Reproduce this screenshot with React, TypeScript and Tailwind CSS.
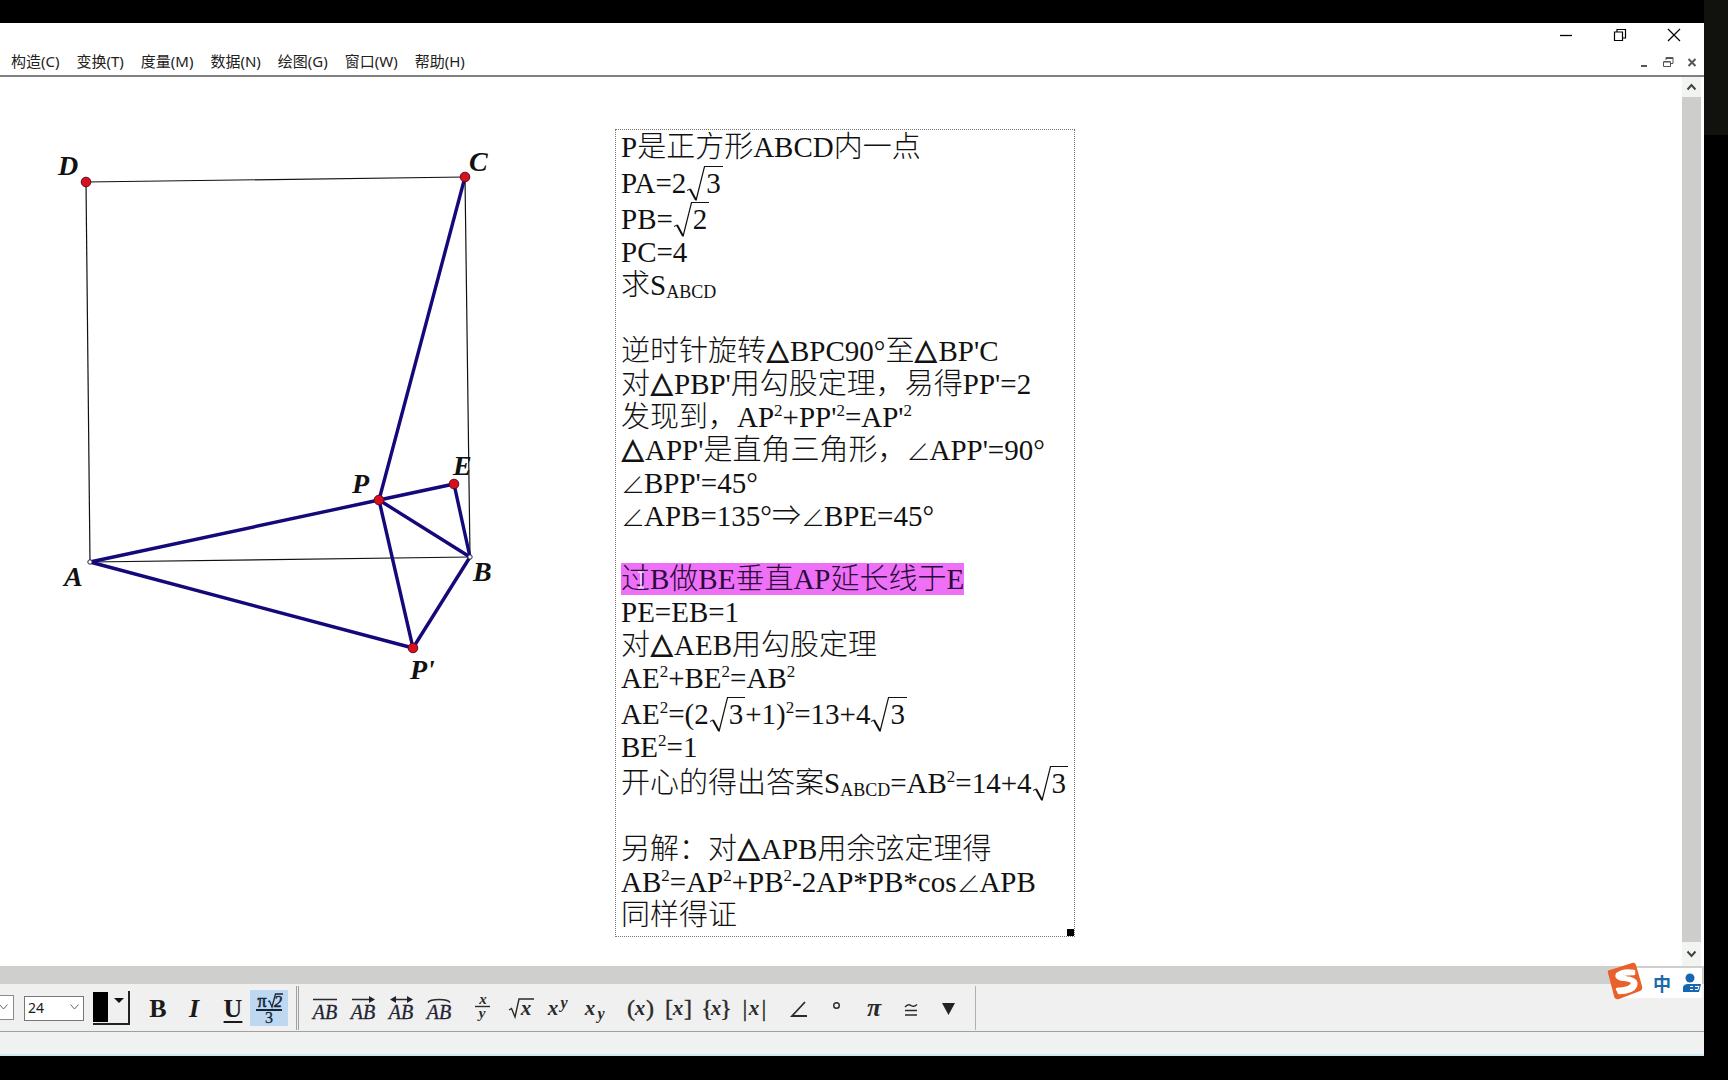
import type { ReactNode } from "react";

const serif = "font-['Liberation_Serif','Noto_Sans_CJK_SC',serif]";

const menus = ["构造(C)", "变换(T)", "度量(M)", "数据(N)", "绘图(G)", "窗口(W)", "帮助(H)"];

const points = {
  A: [90, 485],
  B: [470, 480],
  C: [465, 100],
  D: [86, 105],
  P: [379, 423],
  E: [454, 407],
  Q: [413, 571],
} as const;

type Name = keyof typeof points;

const thin: [Name, Name][] = [["A", "B"], ["B", "C"], ["C", "D"], ["D", "A"]];
const thick: [Name, Name][] = [["C", "P"], ["A", "P"], ["P", "E"], ["E", "B"], ["P", "B"], ["P", "Q"], ["Q", "B"], ["A", "Q"]];
const labels: [string, number, number][] = [
  ["D", 58, 98],
  ["C", 469, 94],
  ["A", 64, 509],
  ["P", 352, 416],
  ["E", 453, 398],
  ["B", 473, 504],
  ["P'", 410, 602],
];

function Segment({ ends, width, color }: { ends: [Name, Name]; width: number; color: string }) {
  const [a, b] = ends;
  return (
    <line x1={points[a][0]} y1={points[a][1]} x2={points[b][0]} y2={points[b][1]} stroke={color} strokeWidth={width} />
  );
}

function Figure() {
  return (
    <svg width="600" height="640" viewBox="0 0 600 640" className="shrink-0" role="img" aria-label="正方形ABCD">
      {thin.map((s) => <Segment key={s.join("")} ends={s} width={1.2} color="#111111" />)}
      {thick.map((s) => <Segment key={s.join("")} ends={s} width={3.4} color="#14087a" />)}
      {(["D", "C", "P", "E", "Q"] as Name[]).map((n) => (
        <circle key={n} cx={points[n][0]} cy={points[n][1]} r="4.8" fill="#d8101c" stroke="#5c0a2a" strokeWidth="1" />
      ))}
      {(["A", "B"] as Name[]).map((n) => (
        <circle key={n} cx={points[n][0]} cy={points[n][1]} r="2.2" fill="#ffffff" stroke="#222244" strokeWidth="1" />
      ))}
      {labels.map(([t, x, y]) => (
        <text key={t} x={x} y={y} className="font-['Liberation_Serif',serif] text-[28px] font-bold italic" fill="#111111">{t}</text>
      ))}
    </svg>
  );
}

function Root({ children }: { children: ReactNode }) {
  return (
    <span className="inline-flex h-[38px] align-top leading-[38px]">
      <svg width="20" height="38" viewBox="0 0 20 38" fill="none" stroke="#111111">
        <path d="M1 26.5L4 25" strokeWidth="1" />
        <path d="M4 25L10 36" strokeWidth="2" />
        <path d="M10 36.5L18.500 2.500H20" strokeWidth="1.2" />
      </svg>
      <span className="bg-linear-to-b from-[#111111] to-[#111111] bg-[length:100%_1px] bg-[position:0_2px] bg-no-repeat pr-0.5">{children}</span>
    </span>
  );
}

const Tri = () => (
  <span className="inline-block w-6 text-center align-[2px] font-['DejaVu_Sans',sans-serif] text-[28px] leading-none [-webkit-text-stroke:1px_#111111]">△</span>
);
const Ang = () => (
  <span className="inline-block w-[23px] text-center font-['Noto_Sans_CJK_SC',sans-serif] text-[24px] leading-none">∠</span>
);
const Sq = () => <sup className="-top-[11px] text-[17px]">2</sup>;
const Sub = () => <sub className="-bottom-[3px] text-[18px]">ABCD</sub>;

const rowHeights = {
  short: "h-8 leading-8",
  normal: "h-[33px] leading-[33px]",
  tall: "h-9 leading-[38px]",
};

function Row({ children, size = "normal" }: { children?: ReactNode; size?: keyof typeof rowHeights }) {
  return <p className={rowHeights[size]}>{children}</p>;
}

function Proof() {
  return (
    <section className={`relative mt-[52px] mb-7 shrink-0 self-start border border-dotted border-[#777777] pt-px pb-1 pr-1 pl-[5px] w-[460px] ml-[15px] whitespace-nowrap text-[29px] font-light text-[#111111] ${serif}`}>
      <Row>P是正方形ABCD内一点</Row>
      <Row size="tall">PA=2<Root>3</Root></Row>
      <Row size="tall">PB=<Root>2</Root></Row>
      <Row>PC=4</Row>
      <Row>求S<Sub /></Row>
      <Row />
      <Row>逆时针旋转<Tri />BPC90°至<Tri />BP'C</Row>
      <Row>对<Tri />PBP'用勾股定理，易得PP'=2</Row>
      <Row>发现到，AP<Sq />+PP'<Sq />=AP'<Sq /></Row>
      <Row><Tri />APP'是直角三角形，<Ang />APP'=90°</Row>
      <Row size="short"><Ang />BPP'=45°</Row>
      <Row size="short"><Ang />APB=135°<span className="inline-block w-[29px] text-center font-['Noto_Sans_CJK_SC',sans-serif] leading-none">⇒</span><Ang />BPE=45°</Row>
      <Row size="short" />
      <Row>
        <mark className="relative inline-block h-8 bg-[#ee70f6] leading-[33px] text-[#2a0a3a]">
          过B做BE垂直AP延长线于E
          <svg className="absolute top-2 left-4" width="8" height="18" viewBox="0 0 8 18" fill="none" stroke="#f8d8ff" strokeWidth="1.5">
            <path d="M1 1H3L4 2L5 1H7M4 2V16M1 17H3L4 16L5 17H7" />
          </svg>
        </mark>
      </Row>
      <Row>PE=EB=1</Row>
      <Row>对<Tri />AEB用勾股定理</Row>
      <Row>AE<Sq />+BE<Sq />=AB<Sq /></Row>
      <Row size="tall">AE<Sq />=(2<Root>3</Root>+1)<Sq />=13+4<Root>3</Root></Row>
      <Row>BE<Sq />=1</Row>
      <Row size="tall">开心的得出答案S<Sub />=AB<Sq />=14+4<Root>3</Root></Row>
      <Row />
      <Row>另解：对<Tri />APB用余弦定理得</Row>
      <Row>AB<Sq />=AP<Sq />+PB<Sq />-2AP*PB*cos<Ang />APB</Row>
      <Row>同样得证</Row>
      <span className="absolute right-0 bottom-0 size-[7px] bg-black" />
    </section>
  );
}

function Chevron({ className = "", up }: { className?: string; up?: boolean }) {
  return (
    <svg className={className} width="11" height="8" viewBox="0 0 11 8" fill="none" stroke="currentColor">
      <path d={up ? "M1.5 6.5L5.5 2L9.5 6.5" : "M1.5 1.5L5.5 6L9.5 1.5"} />
    </svg>
  );
}

function Tool({ label, children }: { label: string; children: ReactNode }) {
  return (
    <button type="button" aria-label={label} className="flex h-9 w-[38px] items-center justify-center">
      {children}
    </button>
  );
}

function Glyph({ children }: { children: ReactNode }) {
  return (
    <svg width="36" height="34" viewBox="0 0 36 34" fill="none" stroke="#2a2a2a" className="overflow-visible font-['Liberation_Serif',serif]">
      {children}
    </svg>
  );
}

const AB = () => <text x="18" y="26" textAnchor="middle" fontSize="20" fontStyle="italic" fill="#222230" stroke="#222230" strokeWidth=".3">AB</text>;

function X({ x, y, size = 21, t = "x" }: { x: number; y: number; size?: number; t?: string }) {
  return <text x={x} y={y} textAnchor="middle" fontSize={size} fontStyle="italic" fontWeight="bold" fill="#2a2a2a" stroke="none">{t}</text>;
}

function Bracket({ l, r }: { l: string; r: string }) {
  return (
    <Glyph>
      <text x="8" y="23" textAnchor="middle" fontSize="24" fill="#2a2a2a" strokeWidth=".4">{l}</text>
      <X x={17} y={22} />
      <text x="27" y="23" textAnchor="middle" fontSize="24" fill="#2a2a2a" strokeWidth=".4">{r}</text>
    </Glyph>
  );
}

function Toolbar() {
  return (
    <div className="flex h-12 items-center border-b border-[#a0a0a0] bg-[#f0f0f0] text-[#1a1a1a]">
      <label className="relative block h-[25px] w-[14px]">
        <select aria-label="字体" className="size-full appearance-none border border-l-0 border-[#8a8a8a] bg-white" />
        <Chevron className="pointer-events-none absolute top-2 right-[5px] text-[#666666]" />
      </label>
      <label className="relative ml-2.5 block h-[25px] w-[60px]">
        <select aria-label="字号" defaultValue="24" className="size-full appearance-none border border-[#777777] bg-white pl-[3px] font-['Noto_Sans',sans-serif] text-sm leading-5">
          <option>24</option>
        </select>
        <Chevron className="pointer-events-none absolute top-2 right-1 text-[#666666]" />
      </label>
      <button type="button" aria-label="颜色" className="ml-[9px] flex h-[34px] w-[37px] border-r-2 border-b-2 border-[#222222]">
        <span className="mt-px h-[30px] w-[15px] bg-black" />
        <svg className="mt-1.5 ml-1.5" width="10" height="8" viewBox="0 0 10 8"><path d="M0 1H10L5 6Z" fill="#111111" /></svg>
      </button>
      <div className="ml-2.5 flex items-center font-['Liberation_Serif',serif] text-[26px] leading-10 font-bold">
        <button type="button" aria-label="粗体" className="w-9 pt-0.5">B</button>
        <button type="button" aria-label="斜体" className="w-9 pt-0.5 italic">I</button>
        <button type="button" aria-label="下划线" className="w-[38px] pt-0.5 pl-1 underline decoration-2 underline-offset-4">U</button>
        <button type="button" aria-label="数学符号" className="h-9 w-[38px] bg-[#bdd8f0]">
          <svg width="38" height="36" viewBox="0 0 38 36" fill="none" stroke="#16253c" className="overflow-visible">
            <text x="12" y="17" textAnchor="middle" fontSize="18" fill="#16253c" strokeWidth=".6" fontWeight="400">π</text>
            <path d="M18 11.500L19.500 11L22 17L25.500 4H33" strokeWidth="1.3" />
            <text x="28" y="17" textAnchor="middle" fontSize="16" fill="#16253c" strokeWidth=".6" fontWeight="400" fontStyle="italic">2</text>
            <path d="M6 20H32" strokeWidth="2" />
            <text x="19" y="33" textAnchor="middle" fontSize="16" fill="#16253c" strokeWidth=".3" fontWeight="400">3</text>
          </svg>
        </button>
      </div>
      <span className="ml-2 h-[44px] w-[3px] border-x border-[#a0a0a0]" />
      <div className="flex h-[44px] items-center gap-1.5 border-r border-[#b0b0b0] pt-1 pr-[5px] pl-[7px]">
        <div className="flex">
          <Tool label="线段"><Glyph><AB /><path d="M6 6.500H30" strokeWidth="1.5" /></Glyph></Tool>
          <Tool label="射线"><Glyph><AB /><path d="M7 6.500H26" strokeWidth="1.5" /><path d="M24 3L30 6.500L24 10Z" fill="#222230" stroke="none" /></Glyph></Tool>
          <Tool label="直线"><Glyph><AB /><path d="M10 6.500H26" strokeWidth="1.5" /><path d="M24 3L30 6.500L24 10ZM13 3L7 6.500L13 10Z" fill="#222230" stroke="none" /></Glyph></Tool>
          <Tool label="弧"><Glyph><AB /><path d="M7 9.500Q9 6.500 18 6.500T29 9.500" strokeWidth="1.5" /></Glyph></Tool>
        </div>
        <div className="flex">
          <Tool label="分数"><Glyph><X x={18} y={11} size={15} /><path d="M10 13.500H25" strokeWidth="1.4" /><X x={17} y={25} size={15} t="y" /></Glyph></Tool>
          <Tool label="根号"><Glyph><path d="M6 17L8.500 15.500L12 24L16 6H31" strokeWidth="1.4" /><X x={23} y={22} /></Glyph></Tool>
          <Tool label="上标"><Glyph><X x={12} y={22} /><X x={23} y={15} size={16} t="y" /></Glyph></Tool>
          <Tool label="下标"><Glyph><X x={11} y={22} /><X x={22} y={26} size={16} t="y" /></Glyph></Tool>
        </div>
        <div className="flex">
          <Tool label="圆括号"><Bracket l="(" r=")" /></Tool>
          <Tool label="方括号"><Bracket l="[" r="]" /></Tool>
          <Tool label="花括号"><Bracket l="{" r="}" /></Tool>
          <Tool label="绝对值"><Bracket l="|" r="|" /></Tool>
        </div>
        <div className="flex">
          <Tool label="角"><Glyph><path d="M24 9L11 23H26" strokeWidth="1.8" /></Glyph></Tool>
          <Tool label="度"><Glyph><circle cx="17.500" cy="12.500" r="2.800" strokeWidth="1.400" /></Glyph></Tool>
          <Tool label="圆周率"><Glyph><text x="17" y="23" textAnchor="middle" fontSize="26" fontStyle="italic" fontWeight="bold" fill="#2a2a2a" stroke="none">π</text></Glyph></Tool>
          <Tool label="全等"><Glyph><path d="M10 14Q13 10.500 16 12.500T22 11.500M10 17.500H22M10 22H22" strokeWidth="1.500" /></Glyph></Tool>
          <Tool label="更多"><Glyph><path d="M9 10H22L15.500 22Z" fill="#222222" stroke="none" /></Glyph></Tool>
        </div>
      </div>
    </div>
  );
}

function ImeBar() {
  return (
    <div className="absolute right-0.5 bottom-[57px] flex h-[37px] items-center">
      <button type="button" aria-label="输入法" className="z-10 h-[38px]">
        <svg width="38" height="38" viewBox="0 0 38 38">
          <path d="M4 8Q1 8 2 11L8 34Q9 38 13 37L34 29Q37 28 36 24L30 3Q29 0 26 1Z" fill="#e9602b" />
          <path d="M28 9Q17 7 11 12Q9 16 15 17.500Q27 18 26 22Q23 27 11 27L13 31Q27 31 30 24Q32 18 24 16Q15 15 17 13Q20 12 28 12Z" fill="#ffffff" stroke="#ffffff" strokeWidth="2.500" strokeLinejoin="round" />
        </svg>
      </button>
      <div className="mt-1 -ml-6 flex h-[30px] items-center bg-white pl-8">
        <button type="button" className="w-5 font-['Noto_Sans_CJK_SC',sans-serif] text-[18px] leading-6 font-bold text-[#1a69a8]">中</button>
        <button type="button" aria-label="用户" className="ml-2.5">
          <svg width="20" height="20" viewBox="0 0 20 20" fill="#1766b0">
            <circle cx="8" cy="5" r="4.500" />
            <path d="M1 19V14Q2 11 6 11H19L17 19Z" />
            <path d="M8 13.500H11M8 16.500H11M13 13.500H17L16 16.500H13" stroke="#ffffff" fill="none" />
          </svg>
        </button>
      </div>
    </div>
  );
}

export default function App() {
  return (
    <div className="flex min-h-screen bg-black">
      <div className="relative mt-[23px] mb-6 flex min-w-0 flex-1 flex-col overflow-hidden bg-white">
        <header className="border-b-2 border-[#808080]">
          <div className="flex h-6 items-center justify-end pr-[3px] text-black">
            <button type="button" aria-label="最小化" className="flex w-[54px] justify-center">
              <svg width="14" height="14" viewBox="0 0 14 14" stroke="currentColor"><path d="M1 7.500H13" strokeWidth="1.300" /></svg>
            </button>
            <button type="button" aria-label="还原" className="flex w-[54px] justify-center">
              <svg width="14" height="14" viewBox="0 0 14 14" fill="none" stroke="currentColor" strokeWidth="1.200"><path d="M1.500 4H9.500V12.500H1.500ZM4 4V1.500H12.500V10H9.500" /></svg>
            </button>
            <button type="button" aria-label="关闭" className="flex w-[54px] justify-center">
              <svg width="14" height="14" viewBox="0 0 14 14" stroke="currentColor" strokeWidth="1.200"><path d="M1 1L13 13M13 1L1 13" /></svg>
            </button>
          </div>
          <div className="flex h-7 items-center justify-between">
            <nav className="flex gap-[17px] pl-[11px] font-['Noto_Sans','Noto_Sans_CJK_SC',sans-serif] text-[15px] leading-5 text-[#222222]">
              {menus.map((m) => <button type="button" key={m} className="shrink-0 whitespace-nowrap">{m}</button>)}
            </nav>
            <div className="flex pt-0.5 text-[#555555]">
              <button type="button" aria-label="最小化文档" className="flex w-6 justify-center">
                <svg width="12" height="12" viewBox="0 0 12 12" stroke="currentColor"><path d="M3 10H9" strokeWidth="2" /></svg>
              </button>
              <button type="button" aria-label="还原文档" className="flex w-6 justify-center">
                <svg width="12" height="12" viewBox="0 0 12 12" fill="none" stroke="currentColor"><path d="M1.500 6H8.500V10.500H1.500ZM1.500 5.500H8.500M4 4V1.500H11V7.500H9M4 2.500H11" /></svg>
              </button>
              <button type="button" aria-label="关闭文档" className="flex w-6 justify-center">
                <svg width="12" height="12" viewBox="0 0 12 12" stroke="currentColor" strokeWidth="2"><path d="M2.500 3L9.500 10M9.500 3L2.500 10" /></svg>
              </button>
            </div>
          </div>
        </header>
        <main className="flex flex-1 bg-white">
          <Figure />
          <Proof />
          <div className="mr-[3px] ml-auto flex w-[19px] flex-col items-center bg-[#f2f4f2] text-[#444444]">
            <button type="button" aria-label="向上滚动" className="flex h-5 w-full items-center justify-center"><Chevron up className="stroke-2" /></button>
            <div className="w-full flex-1 bg-[#cdcdcb]" />
            <button type="button" aria-label="向下滚动" className="flex h-6 w-full items-center justify-center"><Chevron className="stroke-2" /></button>
          </div>
        </main>
        <div className="h-[18px] bg-[#cfd0cd]" />
        <Toolbar />
        <footer className="h-6 border-b-2 border-[#cfeaf3] bg-[#f0f1f1]" />
        <ImeBar />
      </div>
      <div className="w-6">
        <div className="h-[135px] bg-[#11110d]" />
      </div>
    </div>
  );
}
